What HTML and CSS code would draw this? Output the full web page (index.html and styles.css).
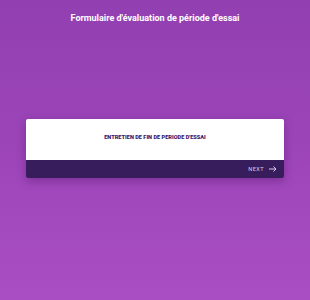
FILE: index.html
```html
<!DOCTYPE html>
<html>
<head>
<meta charset="utf-8">
<link rel="stylesheet" href="styles.css">
</head>
<body>
<div class="page">
  <h1 class="title">Formulaire d'évaluation de période d'essai</h1>
  <div class="card">
    <div class="card-body">
      <div class="section-title">ENTRETIEN DE FIN DE PERIODE D'ESSAI</div>
    </div>
    <div class="card-footer">
      <span class="next">NEXT</span>
      <svg class="arrow" width="8" height="6" viewBox="0 0 8 6"><path d="M0 3H7M4.5 0.5L7 3L4.5 5.5" fill="none" stroke="#d8cde6" stroke-width="1"/></svg>
    </div>
  </div>
</div>
</body>
</html>
```
FILE: styles.css
```css
html, body {
  margin: 0;
  padding: 0;
}
body {
  width: 310px;
  height: 300px;
  overflow: hidden;
  font-family: Roboto, "Liberation Sans", sans-serif;
  background: linear-gradient(180deg, #923fb1 0%, #9c45b9 50%, #aa4fc3 100%);
}
.page {
  display: flex;
  flex-direction: column;
  align-items: center;
  padding-top: 12px;
}
.title {
  margin: 0;
  color: #ffffff;
  font-size: 9px;
  font-weight: 700;
  line-height: 13px;
  text-align: center;
}
.card {
  margin-top: 94px;
  width: 258px;
  border-radius: 2px;
  overflow: hidden;
  box-shadow: 0 3px 10px rgba(60, 10, 80, 0.35);
}
.card-body {
  background: #ffffff;
  height: 41px;
  display: flex;
  justify-content: center;
  padding-top: 15px;
  box-sizing: border-box;
}
.section-title {
  color: #3a1668;
  font-size: 5.6px;
  font-weight: 900;
  line-height: 7px;
}
.card-footer {
  background: #381d5c;
  height: 18px;
  display: flex;
  align-items: center;
  justify-content: flex-end;
  padding-right: 7px;
  gap: 5px;
}
.next {
  color: #d8cde6;
  font-size: 5.5px;
  letter-spacing: 0.5px;
  line-height: 7px;
}
.arrow {
  display: block;
}
```
